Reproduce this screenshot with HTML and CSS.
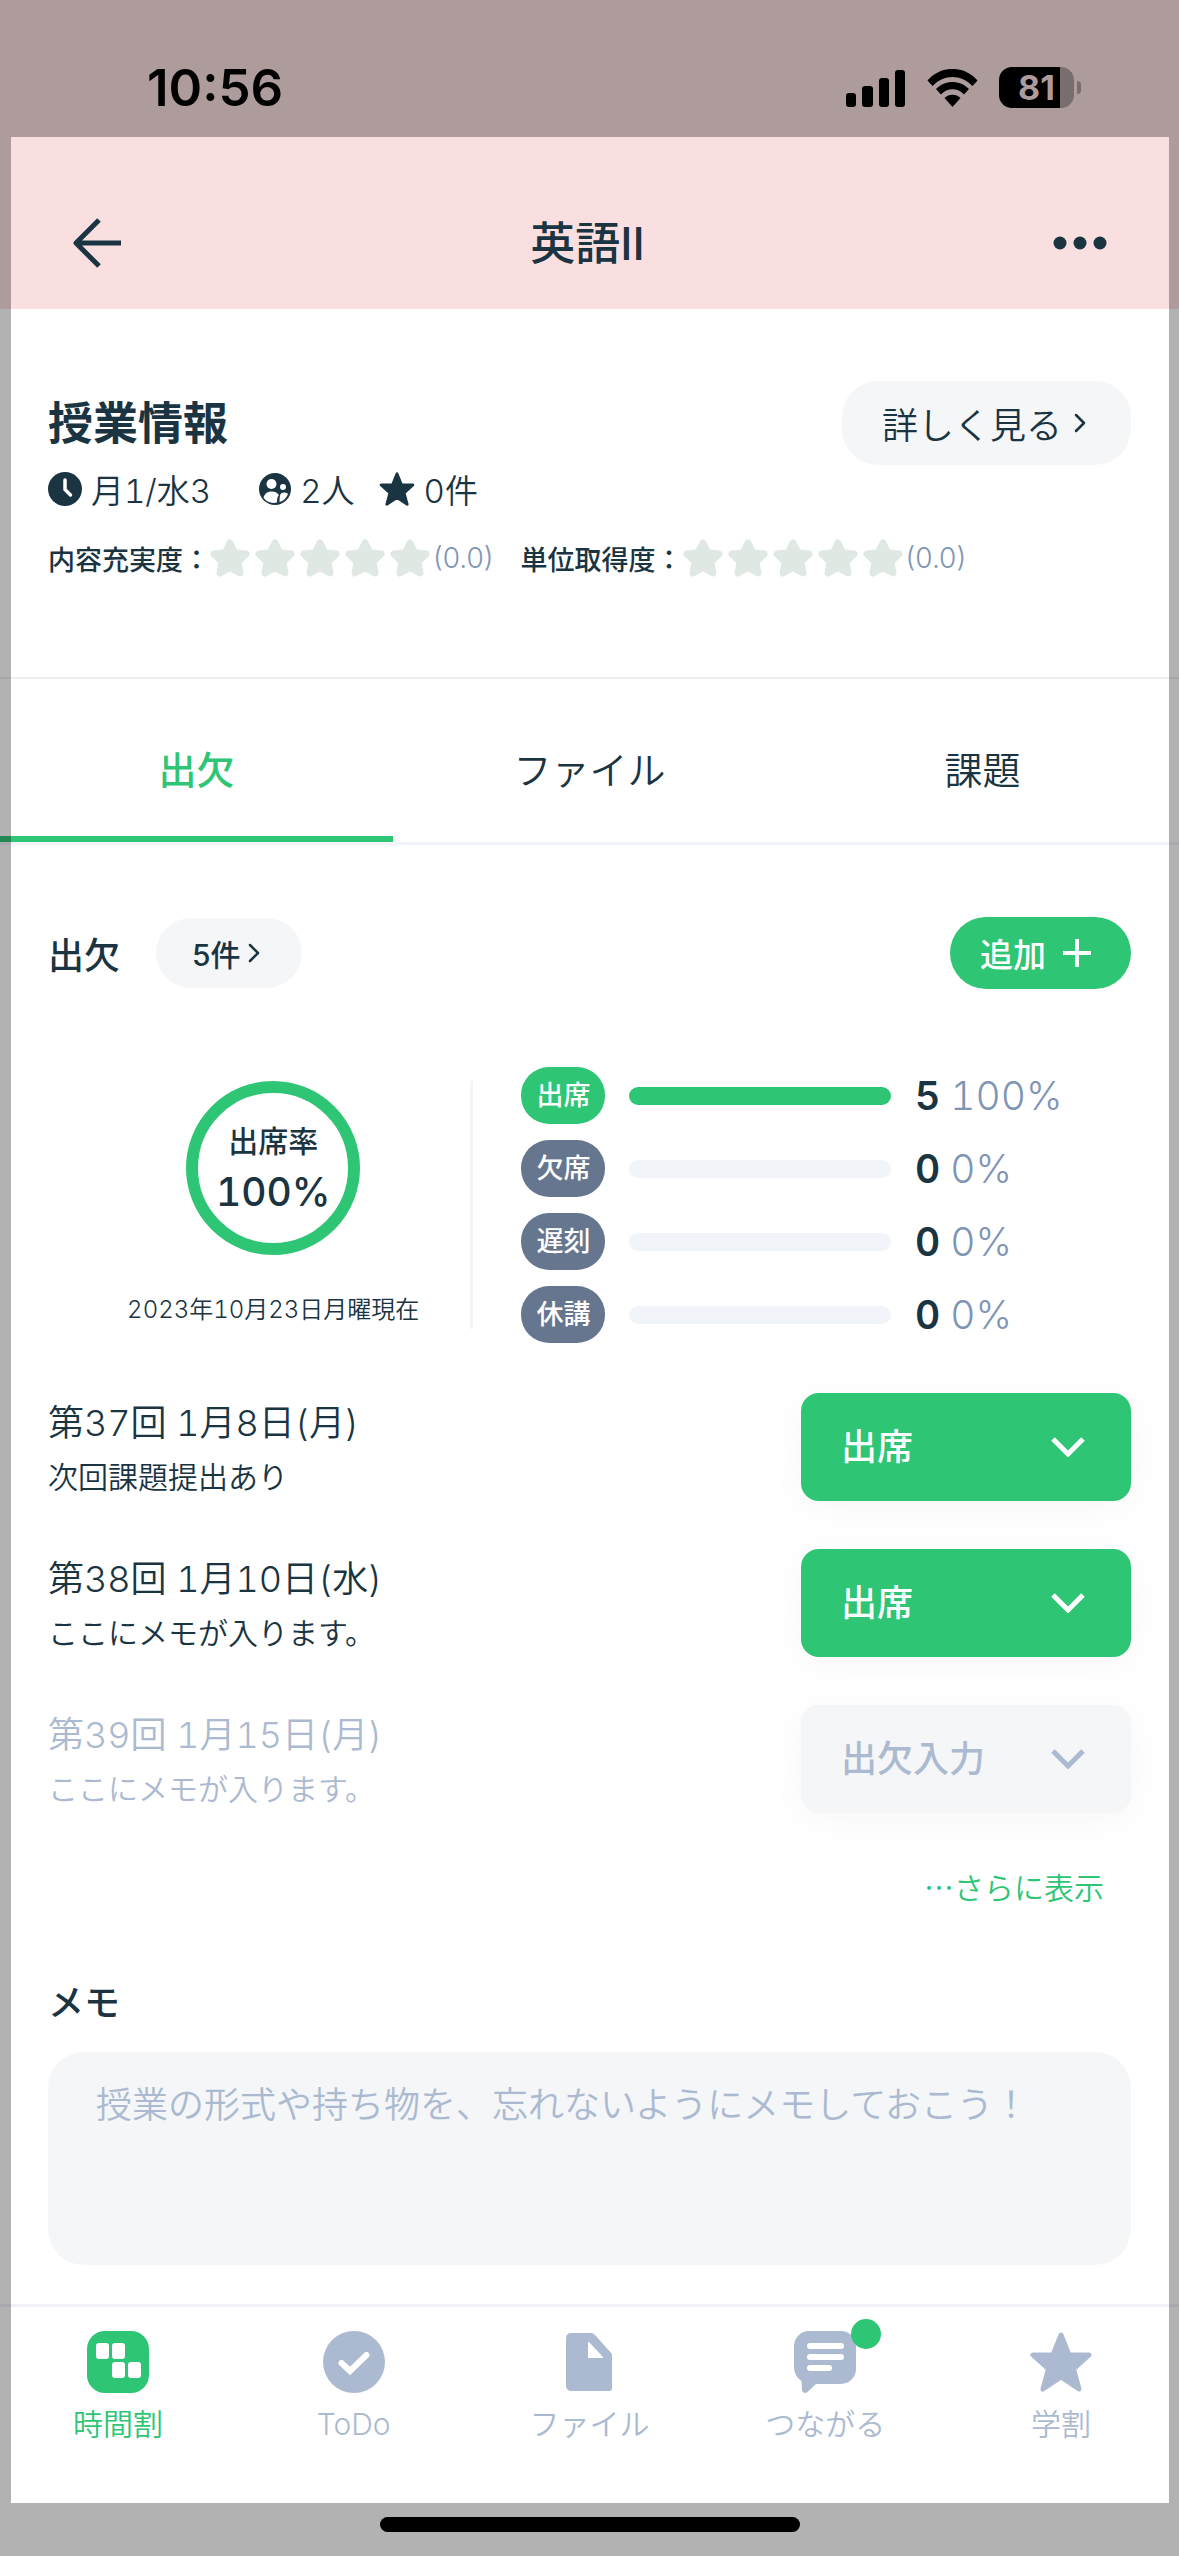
FILE: index.html
```
<!DOCTYPE html>
<html lang="ja">
<head>
    <meta charset="UTF-8">
    <meta name="viewport" content="width=device-width, initial-scale=1.0">
    <title>英語II - 授業情報</title>
    <link rel="stylesheet" href="styles.css">
</head>
<body>
    <!-- Shared icons -->
    <svg class="sprite" aria-hidden="true">
        <symbol id="star-round" viewBox="0 0 40 38">
            <path d="M20 4l4.6 9.6L36 15l-8 7.600 2 11.400-10-5.500-10 5.500 2-11.400L4 15l11.400-1.400z" fill="currentColor" stroke="currentColor" stroke-width="7" stroke-linejoin="round"/>
        </symbol>
        <symbol id="star" viewBox="0 0 62 60">
            <path d="M31 3l8 20h20L43.500 37 49 57 31 45 13 57l5.500-20L3 23h20z" fill="currentColor" stroke="currentColor" stroke-width="5" stroke-linejoin="round"/>
        </symbol>
        <symbol id="chevron-right" viewBox="0 0 12 20">
            <path d="M2 2l8 8-8 8" fill="none" stroke="currentColor" stroke-width="2.500" stroke-linecap="round" stroke-linejoin="round"/>
        </symbol>
        <symbol id="chevron-down" viewBox="0 0 34 20">
            <path d="M2 2l15 15L32 2" fill="none" stroke="currentColor" stroke-width="5"/>
        </symbol>
    </svg>

    <div class="app">
        <div class="status-bar">
            <span class="clock">10:56</span>
            <div class="status-icons">
                <svg width="60" height="38" viewBox="0 0 60 38">
                    <rect x="0" y="24" width="10" height="14" rx="3"/>
                    <rect x="16" y="17" width="11" height="21" rx="3"/>
                    <rect x="33" y="9" width="10" height="29" rx="3"/>
                    <rect x="49" y="1" width="10" height="37" rx="3"/>
                </svg>
                <svg width="51" height="38" viewBox="0 0 51 38">
                    <path d="M0.500 11.500C14-4 37-4 50.500 11.500L45.500 17C34 5 17 5 5.500 17z"/>
                    <path d="M9 20C18 10.500 33 10.500 42 20l-5 5.500c-6-7-17-7-23 0z"/>
                    <path d="M17.500 29c4-4.500 12-4.500 16 0L25.500 38z"/>
                </svg>
                <span class="battery">81</span>
            </div>
        </div>

        <header class="header">
            <button class="icon-btn" aria-label="戻る">
                <svg width="50" height="50" viewBox="0 0 50 50" fill="none" stroke="currentColor" stroke-width="5">
                    <path d="M49 25H4M27 2L4 25l23 23" stroke-linejoin="round"/>
                </svg>
            </button>
            <h1>英語II</h1>
            <button class="icon-btn" aria-label="メニュー">
                <svg width="54" height="14" viewBox="0 0 54 14" fill="currentColor">
                    <circle cx="7" cy="7" r="6.500"/>
                    <circle cx="27" cy="7" r="6.500"/>
                    <circle cx="47" cy="7" r="6.500"/>
                </svg>
            </button>
        </header>

        <section class="info">
            <div class="info-top">
                <h2>授業情報</h2>
                <button class="pill detail-btn">詳しく見る <svg width="12" height="20"><use href="#chevron-right"/></svg></button>
            </div>
            <div class="meta">
                <span class="meta-item meta-time">
                    <svg width="34" height="34" viewBox="0 0 34 34"><circle cx="17" cy="17" r="17" fill="currentColor"/><path d="M17 8v9.500l5.500 5.500" fill="none" stroke="#fff" stroke-width="3.500" stroke-linecap="round" stroke-linejoin="round"/></svg>
                    月1/水3
                </span>
                <span class="meta-item">
                    <svg width="32" height="32" viewBox="0 0 32 32"><circle cx="16" cy="16" r="16" fill="currentColor"/><g fill="#fff"><circle cx="12.500" cy="11" r="5"/><circle cx="24" cy="14" r="3"/><path d="M4.500 24.500C6 20 9 18.500 13 18.500c3 0 5 1 7 3.500-1.500 1.500-2 4-2 7.500C12.500 31 7 28.500 4.500 24.500zM20.500 29c0-5 .5-7.500 1.500-8.500 2-1.500 5-1.500 7 .5-1.500 4-4.500 7-8.500 8z"/></g></svg>
                    2人
                </span>
                <span class="meta-item">
                    <svg width="36" height="34"><use href="#star"/></svg>
                    0件
                </span>
            </div>
            <div class="ratings">
                <div class="rating">
                    <span class="rating-label">内容充実度：</span>
                    <span class="stars">
                        <svg><use href="#star-round"/></svg>
                        <svg><use href="#star-round"/></svg>
                        <svg><use href="#star-round"/></svg>
                        <svg><use href="#star-round"/></svg>
                        <svg><use href="#star-round"/></svg>
                    </span>
                    <span class="score">(0.0)</span>
                </div>
                <div class="rating">
                    <span class="rating-label">単位取得度：</span>
                    <span class="stars">
                        <svg><use href="#star-round"/></svg>
                        <svg><use href="#star-round"/></svg>
                        <svg><use href="#star-round"/></svg>
                        <svg><use href="#star-round"/></svg>
                        <svg><use href="#star-round"/></svg>
                    </span>
                    <span class="score">(0.0)</span>
                </div>
            </div>
        </section>

        <div class="tabs" role="tablist">
            <button class="tab active" role="tab" aria-selected="true">出欠</button>
            <button class="tab" role="tab">ファイル</button>
            <button class="tab" role="tab">課題</button>
        </div>

        <main class="content">
            <div class="section-head">
                <h3>出欠</h3>
                <button class="pill count-btn">5件<svg width="12" height="20"><use href="#chevron-right"/></svg></button>
                <button class="add-btn">追加
                    <svg width="28" height="28" viewBox="0 0 28 28" stroke="currentColor" stroke-width="4"><path d="M14 0v28M0 14h28"/></svg>
                </button>
            </div>

            <div class="summary">
                <div class="gauge">
                    <div class="ring">
                        <span class="ring-label">出席率</span>
                        <span class="ring-value">100%</span>
                    </div>
                    <p class="as-of">2023年10月23日月曜現在</p>
                </div>
                <div class="stats">
                    <div class="stat present">
                        <span class="badge">出席</span>
                        <div class="bar"><div class="bar-fill" style="width: 100%"></div></div>
                        <span class="stat-value"><b>5</b>100%</span>
                    </div>
                    <div class="stat">
                        <span class="badge">欠席</span>
                        <div class="bar"><div class="bar-fill" style="width: 0%"></div></div>
                        <span class="stat-value"><b>0</b>0%</span>
                    </div>
                    <div class="stat">
                        <span class="badge">遅刻</span>
                        <div class="bar"><div class="bar-fill" style="width: 0%"></div></div>
                        <span class="stat-value"><b>0</b>0%</span>
                    </div>
                    <div class="stat">
                        <span class="badge">休講</span>
                        <div class="bar"><div class="bar-fill" style="width: 0%"></div></div>
                        <span class="stat-value"><b>0</b>0%</span>
                    </div>
                </div>
            </div>

            <div class="sessions">
                <div class="session">
                    <div class="session-text">
                        <label class="session-title" for="session37">第37回 1月8日(月)</label>
                        <p>次回課題提出あり</p>
                    </div>
                    <div class="select-box">
                        <select id="session37"><option>出席</option><option>欠席</option><option>遅刻</option><option>休講</option></select>
                        <svg width="34" height="20"><use href="#chevron-down"/></svg>
                    </div>
                </div>
                <div class="session">
                    <div class="session-text">
                        <label class="session-title" for="session38">第38回 1月10日(水)</label>
                        <p>ここにメモが入ります。</p>
                    </div>
                    <div class="select-box">
                        <select id="session38"><option>出席</option><option>欠席</option><option>遅刻</option><option>休講</option></select>
                        <svg width="34" height="20"><use href="#chevron-down"/></svg>
                    </div>
                </div>
                <div class="session upcoming">
                    <div class="session-text">
                        <label class="session-title" for="session39">第39回 1月15日(月)</label>
                        <p>ここにメモが入ります。</p>
                    </div>
                    <div class="select-box">
                        <select id="session39"><option>出欠入力</option><option>出席</option><option>欠席</option><option>遅刻</option><option>休講</option></select>
                        <svg width="34" height="20"><use href="#chevron-down"/></svg>
                    </div>
                </div>
            </div>
            <a class="more" href="#">…さらに表示</a>

            <label class="memo-label" for="memo">メモ</label>
            <textarea class="memo" id="memo" placeholder="授業の形式や持ち物を、忘れないようにメモしておこう！"></textarea>
        </main>

        <nav class="bottom-nav">
            <a class="nav-item active" href="#">
                <svg width="62" height="62" viewBox="0 0 62 62"><rect width="62" height="62" rx="18" fill="currentColor"/><g fill="#fff"><rect x="9" y="12" width="13" height="16" rx="3"/><rect x="25" y="12" width="13" height="16" rx="3"/><rect x="25" y="31" width="13" height="16" rx="3"/><rect x="41" y="31" width="13" height="16" rx="3"/></g></svg>
                時間割
            </a>
            <a class="nav-item" href="#">
                <svg width="62" height="62" viewBox="0 0 62 62"><circle cx="31" cy="31" r="31" fill="currentColor"/><path d="M18.500 32l8.500 8 16.500-16" fill="none" stroke="#fff" stroke-width="6" stroke-linecap="round"/></svg>
                ToDo
            </a>
            <a class="nav-item" href="#">
                <svg width="62" height="62" viewBox="0 0 62 62"><path d="M13 2h20q2 0 4 2l17 19v34a3 3 0 0 1-3 3H13a5 5 0 0 1-5-5V7a5 5 0 0 1 5-5z" fill="currentColor"/><path d="M30 12v15h14q2 0 0-2L32 12q-2-2-2 0z" fill="#fff"/></svg>
                ファイル
            </a>
            <a class="nav-item" href="#">
                <span class="nav-icon">
                    <svg width="62" height="62" viewBox="0 0 62 62"><path d="M15 0h32a15 15 0 0 1 15 15v23a15 15 0 0 1-15 15H22l-9 8.500q-4 1.500-5-2L7.500 50Q0 45 0 36V15A15 15 0 0 1 15 0z" fill="currentColor"/><path d="M16 15h31M16 26h31M16 37h19" stroke="#fff" stroke-width="6" stroke-linecap="round"/></svg>
                    <span class="nav-dot"></span>
                </span>
                つながる
            </a>
            <a class="nav-item" href="#">
                <svg width="62" height="62"><use href="#star"/></svg>
                学割
            </a>
        </nav>
        <div class="home-indicator"></div>
    </div>
</body>
</html>
```
FILE: styles.css
```
* {
    box-sizing: border-box;
}
body {
    margin: 0;
    background: #fff;
    color: #1a3442;
    font-family: Inter, 'Noto Sans CJK JP', sans-serif;
    font-weight: 350;
    font-size: 30px;
}
h1, h2, h3, p {
    margin: 0;
}
button, select, textarea {
    font: inherit;
    color: inherit;
    border: none;
    cursor: pointer;
}
a {
    text-decoration: none;
}
svg {
    display: block;
    flex: none;
}
.sprite {
    display: none;
}
.app {
    position: relative;
    display: flex;
    flex-direction: column;
    min-height: 100vh;
}
/* dimmed frame around the safe area */
.app::after {
    content: "";
    position: absolute;
    inset: 137px 0 0;
    border: solid rgba(0, 0, 0, 0.3);
    border-width: 0 10px 53px 11px;
    pointer-events: none;
}

/* Status bar */
.status-bar {
    display: flex;
    justify-content: space-between;
    align-items: center;
    height: 137px;
    padding: 38px 105px 0 147px;
    background: #ae9c9c;
    color: #000;
}
.clock {
    font-size: 51px;
    font-weight: 600;
}
.status-icons {
    display: flex;
    align-items: center;
    gap: 21px;
}
.battery {
    position: relative;
    width: 75px;
    height: 41px;
    border-radius: 13px;
    background: linear-gradient(to right, #000 81%, #796d6d 81%);
    color: #ae9c9c;
    font-size: 34px;
    font-weight: 700;
    line-height: 41px;
    text-align: center;
}
.battery::after {
    content: "";
    position: absolute;
    left: 78px;
    top: 14px;
    width: 4px;
    height: 13px;
    border-radius: 0 4px 4px 0;
    background: #796d6d;
}

/* Header */
.header {
    display: flex;
    justify-content: space-between;
    align-items: center;
    height: 172px;
    padding: 40px 72px 0;
    background: #f9dfdf;
}
.header h1 {
    padding-bottom: 6px;
    font-size: 45px;
    font-weight: 500;
}
.icon-btn {
    padding: 0;
    background: none;
}

/* Lesson info */
.info {
    padding: 72px 48px 101px;
    border-bottom: 2px solid #efefef;
}
.info-top {
    display: flex;
    justify-content: space-between;
    align-items: center;
}
.info h2 {
    padding-bottom: 6px;
    font-size: 45px;
    font-weight: 700;
}
.pill {
    display: flex;
    align-items: center;
    border-radius: 36px;
    background: #f4f6f8;
}
.detail-btn {
    height: 84px;
    gap: 12px;
    padding: 0 45px 0 40px;
    font-size: 36px;
}
.meta {
    display: flex;
    align-items: center;
    gap: 24px;
    height: 36px;
    margin-top: 6px;
    font-size: 33px;
    font-variant-numeric: tabular-nums;
}
.meta-item {
    display: flex;
    align-items: center;
    gap: 9px;
}
.meta-time {
    margin-right: 24px;
}
.ratings {
    display: flex;
    gap: 27px;
    height: 36px;
    margin-top: 33px;
}
.rating {
    display: flex;
    align-items: center;
}
.rating-label {
    font-size: 27px;
    font-weight: 500;
}
.stars {
    display: flex;
    gap: 5px;
    color: #e0e8e4;
}
.stars svg {
    width: 40px;
    height: 38px;
}
.score {
    margin-left: 3px;
    color: #7f95b5;
    font-size: 28px;
    font-weight: 300;
}

/* Tabs */
.tabs {
    display: flex;
    border-bottom: 3px solid #f1f4f9;
}
.tab {
    flex: 1;
    height: 163px;
    padding: 20px 0 0;
    border-bottom: 6px solid transparent;
    background: none;
    font-size: 38px;
}
.tab.active {
    border-color: #2ec574;
    color: #2ec574;
    font-weight: 500;
}

/* Attendance */
.content {
    flex: 1;
    display: flex;
    flex-direction: column;
    padding: 72px 48px 38px;
}
.section-head {
    display: flex;
    align-items: center;
    height: 72px;
}
h3, .memo-label {
    font-size: 36px;
    font-weight: 500;
}
.count-btn {
    height: 70px;
    margin-left: 36px;
    gap: 7px;
    padding: 0 42px 0 36px;
    font-weight: 500;
}
.add-btn {
    display: flex;
    align-items: center;
    gap: 17px;
    height: 72px;
    margin-left: auto;
    padding: 0 40px 0 30px;
    border-radius: 36px;
    background: #2ec574;
    color: #fff;
    font-size: 33px;
    font-weight: 500;
}
.summary {
    display: grid;
    grid-template-columns: 11fr 17fr;
    align-items: center;
    margin-top: 78px;
    font-variant-numeric: tabular-nums;
}
.gauge {
    display: flex;
    flex-direction: column;
    align-items: center;
    padding-left: 28px;
    border-right: 3px solid #f4f5f6;
}
.ring {
    display: flex;
    flex-direction: column;
    justify-content: center;
    align-items: center;
    width: 174px;
    height: 174px;
    border: 12px solid #2ec574;
    border-radius: 50%;
    font-weight: 500;
}
.ring-label {
    line-height: 48px;
}
.ring-value {
    font-size: 39px;
    line-height: 54px;
}
.as-of {
    margin-top: 36px;
    font-size: 24px;
    line-height: 38px;
}
.stats {
    display: flex;
    flex-direction: column;
    gap: 16px;
    padding-left: 48px;
}
.stat {
    display: flex;
    align-items: center;
    height: 57px;
}
.badge {
    width: 84px;
    border-radius: 28px;
    background: #66768f;
    color: #fff;
    font-size: 27px;
    font-weight: 500;
    line-height: 57px;
    text-align: center;
}
.present .badge, .bar-fill {
    background: #2ec574;
}
.bar {
    flex: 1;
    height: 18px;
    margin: 0 24px;
    border-radius: 9px;
    background: #f1f5fa;
    overflow: hidden;
}
.bar-fill {
    height: 100%;
}
.stat-value {
    width: 216px;
    color: #7f95b5;
    font-size: 39px;
}
.stat-value b {
    margin-right: 10px;
    color: #1a3442;
    font-weight: 600;
}

/* Sessions */
.sessions {
    display: flex;
    flex-direction: column;
    gap: 48px;
    margin-top: 50px;
}
.session {
    display: flex;
    justify-content: space-between;
}
.session-title {
    display: block;
    font-size: 36px;
    font-variant-numeric: tabular-nums;
    line-height: 60px;
}
.session-text p {
    line-height: 48px;
}
.select-box {
    display: grid;
    align-items: center;
    width: 330px;
    color: #fff;
}
.select-box select {
    grid-area: 1 / 1;
    appearance: none;
    width: 100%;
    height: 108px;
    padding: 0 40px;
    border-radius: 18px;
    background: #2ec574;
    box-shadow: 0 6px 36px rgba(0, 0, 0, 0.04);
    font-size: 36px;
    font-weight: 500;
}
.select-box svg {
    grid-area: 1 / 1;
    justify-self: end;
    margin-right: 46px;
    pointer-events: none;
}
.upcoming, .upcoming .select-box {
    color: #abbad0;
}
.upcoming select {
    background: #f4f6f8;
}
.more {
    align-self: flex-end;
    margin: 53px 27px 0 0;
    color: #2ec574;
    font-family: 'Noto Sans CJK JP', sans-serif;
    line-height: 40px;
}
.memo-label {
    margin-top: 73px;
    line-height: 48px;
}
.memo {
    height: 213px;
    margin-top: 25px;
    padding: 26px 48px;
    border-radius: 36px;
    background: #f4f6f8;
    font-size: 36px;
    line-height: 54px;
    resize: none;
}
.memo::placeholder {
    color: #abbad0;
    opacity: 1;
}

/* Bottom navigation */
.bottom-nav {
    display: flex;
    padding: 24px 0 75px;
    border-top: 3px solid #f2f3f8;
}
.nav-item {
    flex: 1 0 0;
    display: flex;
    flex-direction: column;
    align-items: center;
    gap: 13px;
    color: #abbad0;
    line-height: 36px;
}
.nav-item.active {
    color: #2ec574;
}
.nav-icon {
    position: relative;
}
.nav-dot {
    position: absolute;
    top: -12px;
    right: -25px;
    width: 30px;
    height: 30px;
    border-radius: 50%;
    background: #2ec574;
}
.home-indicator {
    position: relative;
    z-index: 1;
    align-self: center;
    width: 420px;
    height: 15px;
    margin-bottom: 24px;
    border-radius: 8px;
    background: #000;
}
```
